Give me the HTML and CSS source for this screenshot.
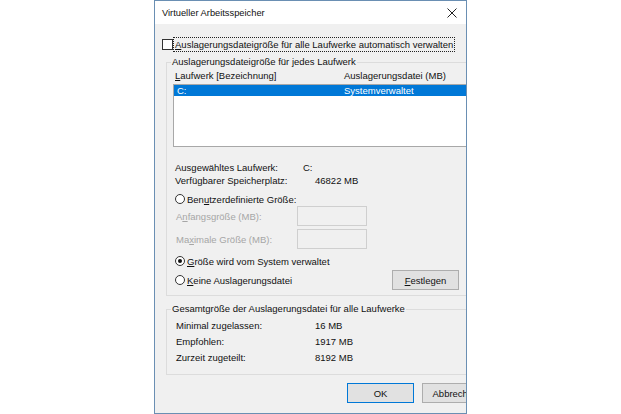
FILE: index.html
```html
<!DOCTYPE html>
<html lang="de">
<head>
  <meta charset="UTF-8">
  <title>Virtueller Arbeitsspeicher</title>
  <link rel="stylesheet" href="styles.css">
</head>
<body>

  <div class="window">
    <div class="titlebar">
      <span>Virtueller Arbeitsspeicher</span>
      <svg class="close" width="10" height="10" viewBox="0 0 10 10">
        <path d="M0.5 0.5 L9.5 9.5 M9.5 0.5 L0.5 9.5" stroke="#222" stroke-width="1" fill="none"/>
      </svg>
    </div>

    <div class="content">
      <div class="auto">
        <span class="check"></span>
        <span class="focus"><u>A</u>uslagerungsdateigröße für alle Laufwerke automatisch verwalten</span>
      </div>

      <!-- Laufwerke -->
      <fieldset class="group drives">
        <legend>Auslagerungsdateigröße für jedes Laufwerk</legend>
        <div class="cols head">
          <span><u>L</u>aufwerk [Bezeichnung]</span>
          <span>Auslagerungsdatei (MB)</span>
        </div>
        <div class="listbox">
          <div class="cols row selected">
            <span>C:</span>
            <span>Systemverwaltet</span>
          </div>
        </div>

        <div class="info">
          <span>Ausgewähltes Laufwerk:</span><span class="drive">C:</span>
          <span>Verfügbarer Speicherplatz:</span><span class="val">46822 MB</span>
        </div>

        <div class="radio first"><span class="dot"></span><span>Ben<u>u</u>tzerdefinierte Größe:</span></div>
        <div class="field disabled"><span>A<u>n</u>fangsgröße (MB):</span><span class="input"></span></div>
        <div class="field disabled"><span>Ma<u>x</u>imale Größe (MB):</span><span class="input"></span></div>
        <div class="radio"><span class="dot on"></span><span><u>G</u>röße wird vom System verwaltet</span></div>
        <div class="radio last">
          <span class="dot"></span><span><u>K</u>eine Auslagerungsdatei</span>
          <button class="btn set"><u>F</u>estlegen</button>
        </div>
      </fieldset>

      <!-- Gesamt -->
      <fieldset class="group total">
        <legend>Gesamtgröße der Auslagerungsdatei für alle Laufwerke</legend>
        <div class="stat"><span>Minimal zugelassen:</span><span>16 MB</span></div>
        <div class="stat"><span>Empfohlen:</span><span>1917 MB</span></div>
        <div class="stat"><span>Zurzeit zugeteilt:</span><span>8192 MB</span></div>
      </fieldset>

      <div class="actions">
        <button class="btn default">OK</button>
        <button class="btn">Abbrechen</button>
      </div>
    </div>
  </div>

</body>
</html>
```

FILE: styles.css
```css
* { box-sizing: border-box; margin: 0; padding: 0; }
body { background: #fff; font-family: 'Liberation Sans', Arial, sans-serif; font-size: 9.5px; color: #111; }
u { text-decoration: underline; }

.window { width: 313px; height: 414px; margin-left: 154px; border: 1px solid #6a8fb3; background: #f0f0f0; overflow: hidden; }
.titlebar { height: 23px; background: #fff; display: flex; align-items: center; justify-content: space-between; padding: 0 9px 0 7px; font-size: 9.3px; }
.close { display: block; }

.content { width: 340px; padding: 13px 0 0 7px; }
.auto { display: flex; align-items: center; height: 14px; }
.check { width: 11px; height: 11px; border: 1px solid #333; background: #fff; margin-right: 1px; }
.focus { outline: 1px dotted #222; padding: 0 1px; line-height: 13px; }

.group { border: 1px solid #dcdcdc; border-right: none; margin: 5px 0 0 4px; padding: 0 0 0 8px; }
.group legend { padding: 0 1px; margin-left: -4px; line-height: 12px; }

.cols { display: grid; grid-template-columns: 169px 1fr; }
.head { height: 14px; align-items: center; }
.listbox { height: 63px; margin: 2px 0 0 -2px; border: 1px solid #a8a8a8; background: #fff; }
.row { height: 11px; line-height: 11px; padding-left: 3px; grid-template-columns: 167px 1fr; }
.selected { background: #0078d7; color: #fff; }

.info { display: grid; grid-template-columns: 128px auto; row-gap: 1px; margin-top: 15px; line-height: 12px; }
.info .val { padding-left: 12px; }

.radio { display: flex; align-items: center; height: 18px; gap: 2px; }
.radio.first { height: 14px; margin-top: 5px; }
.dot { width: 10px; height: 10px; border: 1px solid #333; border-radius: 50%; background: #fff; position: relative; }
.dot.on::after { content: ''; position: absolute; left: 2px; top: 2px; width: 4px; height: 4px; border-radius: 50%; background: #111; }

.field { display: grid; grid-template-columns: 121px 70px; align-items: center; height: 20px; margin-bottom: 3px; padding-left: 1px; }
.disabled { color: #a6a6a6; }
.input { height: 20px; border: 1px solid #cfcfcf; background: #f0f0f0; }

.radio.last { height: 20px; width: 284px; }
.btn { font-family: inherit; font-size: 9.5px; color: #111; background: #e1e1e1; border: 1px solid #adadad; height: 20px; width: 67px; }
.set { margin-left: auto; }
.drives { padding-bottom: 5px; }

.total { margin-top: 7px; padding: 2px 0 9px 8px; }
.stat { display: grid; grid-template-columns: 139px auto; height: 16px; align-items: center; padding-left: 1px; }

.actions { display: flex; gap: 8px; margin: 8px 0 0 185px; }
.default { border-color: #0078d7; }
```
